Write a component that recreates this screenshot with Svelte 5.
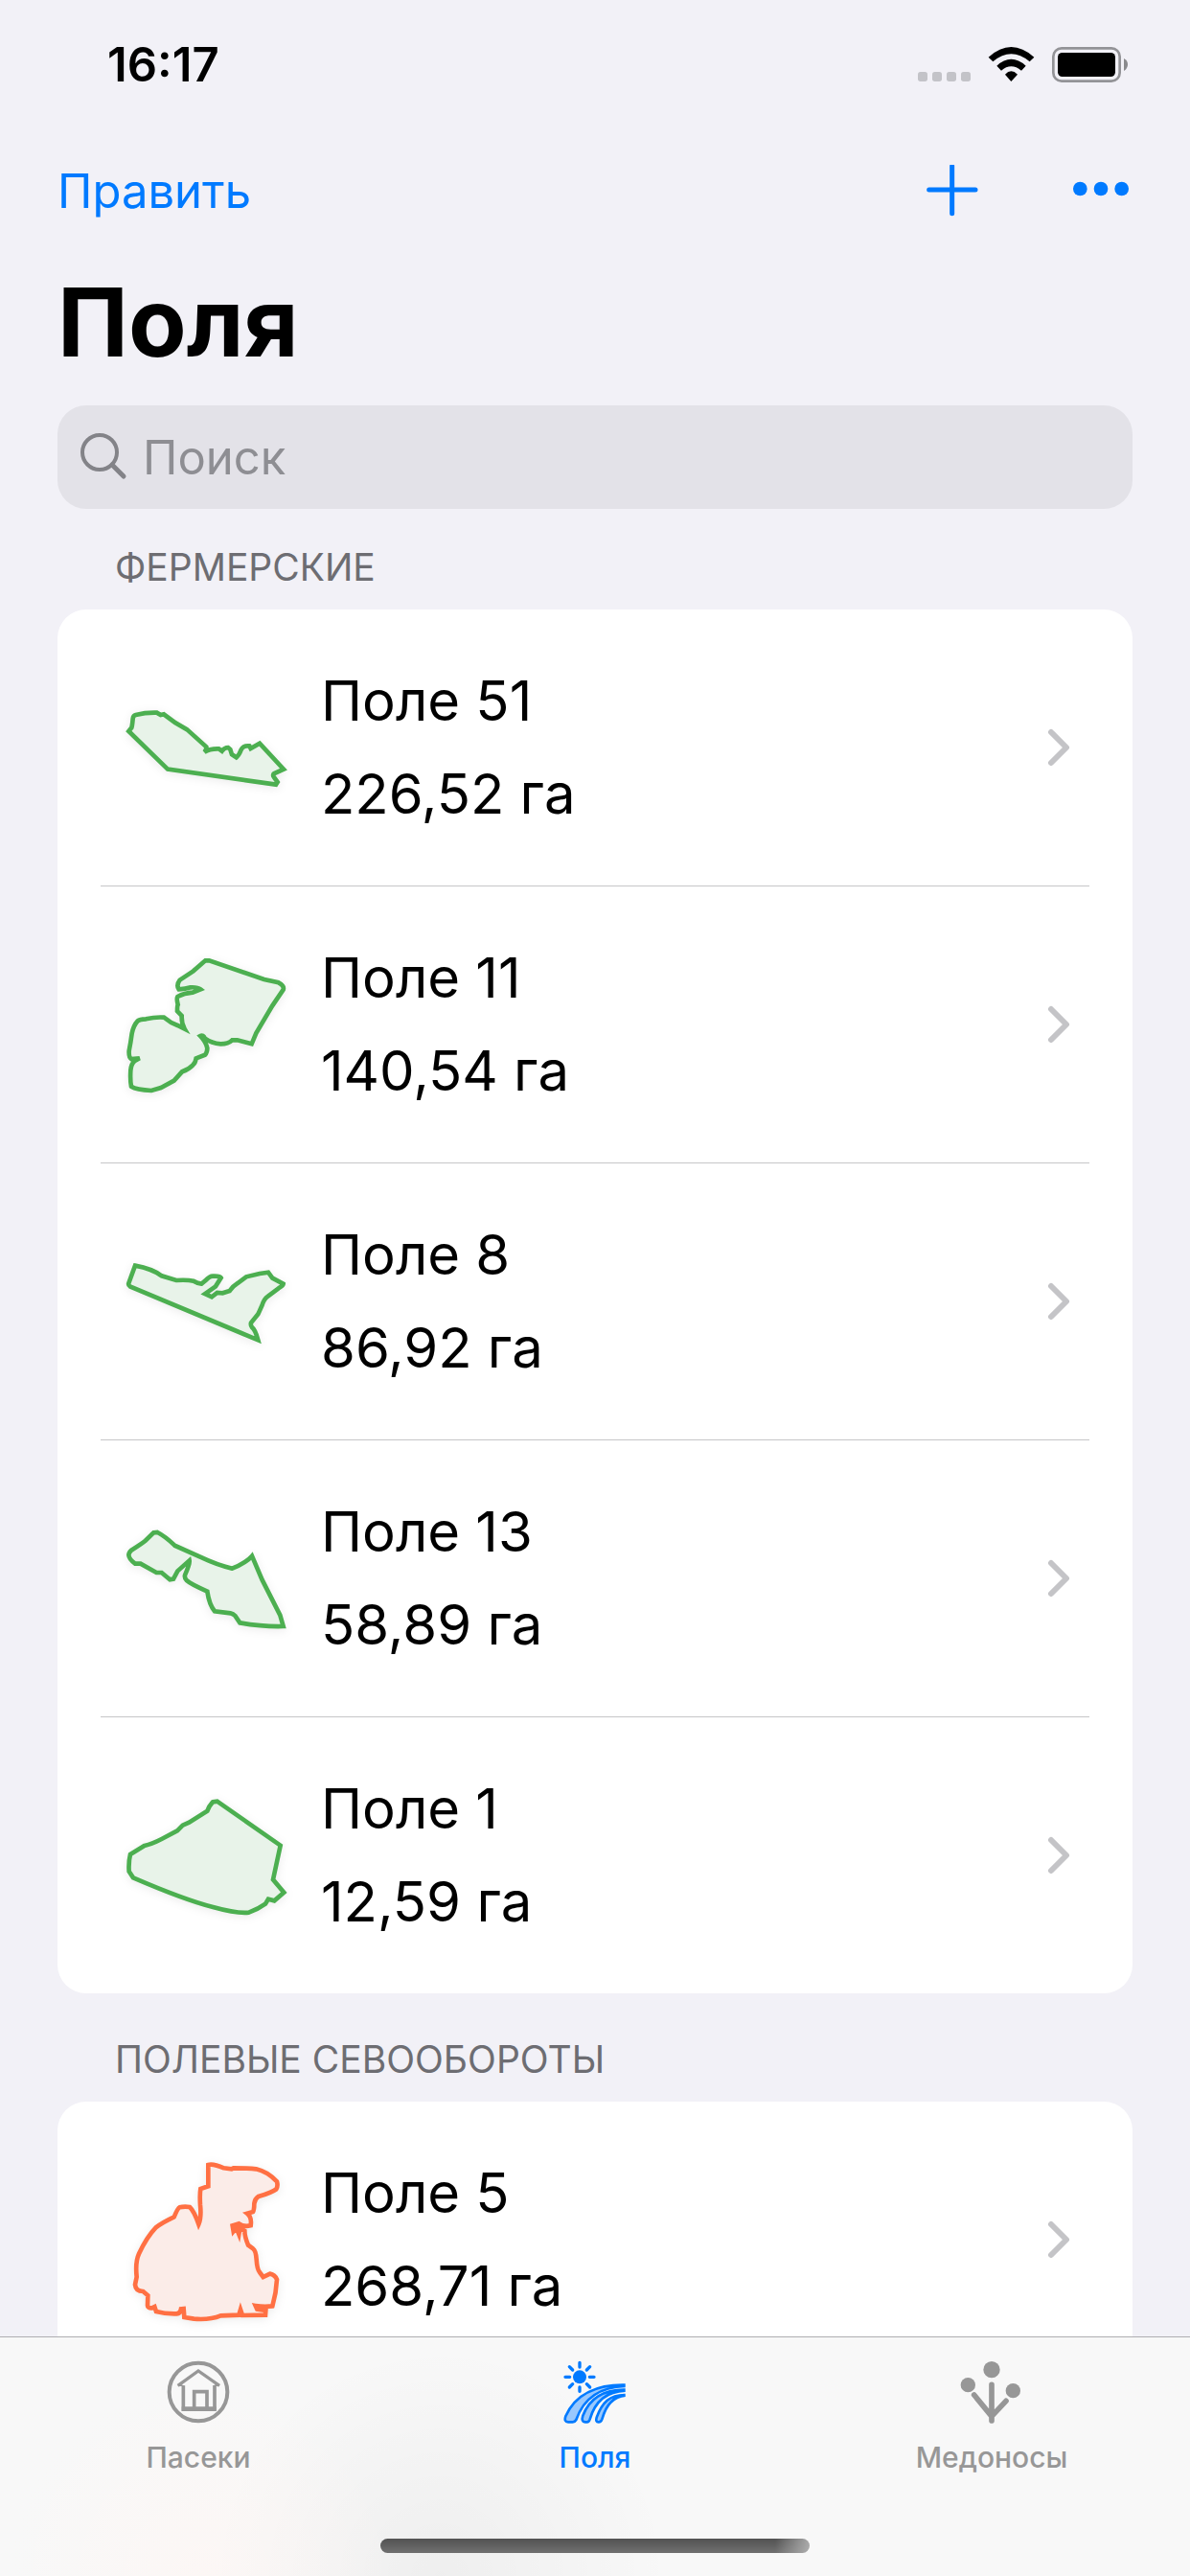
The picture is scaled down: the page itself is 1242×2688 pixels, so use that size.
<script lang="ts">
  interface Field {
    name: string;
    area: string;
    viewBox: string;
    outline: string;
  }

  interface Group {
    title: string;
    kind: 'farm' | 'rotation';
    fields: Field[];
  }

  const groups: Group[] = [
    {
      title: 'Фермерские',
      kind: 'farm',
      fields: [
        {
          name: 'Поле 51',
          area: '226,52 га',
          viewBox: '78 -30 540 540',
          outline:
            'M106 189 L115 178 Q117 172 119 150 Q120 140 128 138 Q160 130 194 131 L206 138 L216 136 Q250 164 289 184 L349 238 Q350 246 343 254 Q360 243 388 244 L398 251 Q406 240 417 240 L424 246 L429 262 L443 271 Q452 264 458 247 Q465 233 484 235 L488 243 L516 227 L591 308 L562 321 Q555 326 561 333 L572 348 L567 356 L228 308 Z'
        },
        {
          name: 'Поле 11',
          area: '140,54 га',
          viewBox: '78 27 540 540',
          outline:
            'M346 97 L358 97 L530 156 L575 166 Q594 176 590 188 L556 238 L505 324 L491 358 L446 346 L430 346 Q418 358 394 358 Q365 356 345 341 Q339 328 330 333 Q348 352 352 371 Q352 384 345 392 L317 403 Q315 417 307 424 Q294 438 273 445 L248 473 L207 495 L177 504 Q130 501 114 491 Q110 472 112 440 Q114 420 124 412 L140 403 L114 405 Q106 400 107 380 Q112 355 116 325 Q121 300 134 286 Q140 281 160 280 Q190 273 217 275 Q237 292 259 300 L281 311 Q271 294 272 270 L258 255 Q258 238 260 235 Q255 215 259 210 Q280 199 306 197 L331 187 Q322 180 300 181 Q283 186 263 187 Q254 174 266 158 L308 130 Z'
        },
        {
          name: 'Поле 8',
          area: '86,92 га',
          viewBox: '78 -66 540 540',
          outline:
            'M126 92 Q180 102 209 124 L255 138 Q290 136 309 140 Q322 148 334 149 L345 140 Q360 124 370 125 Q392 124 395 130 L378 157 L345 180 L366 190 L383 177 L400 178 L422 171 Q432 156 447 147 L474 127 L516 117 L543 113 L556 131 L590 149 Q590 154 575 163 L542 188 Q530 196 524 215 L511 244 L489 271 Q487 278 492 285 Q502 292 511 325 L430 291 L110 157 Q104 153 106 147 Z'
        },
        {
          name: 'Поле 13',
          area: '58,89 га',
          viewBox: '78 -40 540 540',
          outline:
            'M184 87 L196 86 Q220 98 250 127 L330 163 Q385 189 430 199 Q475 180 492 160 L524 235 L580 345 L590 380 Q530 382 454 369 L440 348 Q433 340 425 339 L375 333 Q358 312 352 271 Q300 248 288 237 Q280 229 282 220 Q298 184 296 174 L259 207 L246 232 L235 234 L209 212 L193 212 L143 184 L126 184 Q107 170 106 157 Q106 149 114 142 Q150 119 158 112 Z'
        },
        {
          name: 'Поле 1',
          area: '12,59 га',
          viewBox: '78 -14 540 540',
          outline:
            'M369 89 L383 87 L581 225 L558 332 L592 372 L562 398 L543 393 L534 408 Q512 424 482 435 Q445 439 370 418 Q280 395 120 326 L107 306 Q105 277 111 253 L155 226 Q178 221 209 205 L258 179 L275 162 L295 153 L352 117 Q357 102 369 89 Z'
        }
      ]
    },
    {
      title: 'Полевые севообороты',
      kind: 'rotation',
      fields: [
        {
          name: 'Поле 5',
          area: '268,71 га',
          viewBox: '78 48 540 540',
          outline:
            'M355 84 Q370 79 404 94 L428 97 L434 94 Q480 94 505 97 Q540 105 570 136 Q574 150 568 160 Q556 170 512 183 Q501 190 499 205 Q499 225 495 231 L477 236 Q492 248 488 274 Q465 279 451 268 L431 274 L434 292 L443 281 L451 301 L454 283 L469 291 Q469 308 480 335 L496 347 Q504 352 506 380 Q508 412 516 420 L527 435 L548 425 Q564 428 570 443 Q568 485 556 526 Q530 529 503 525 L508 536 L535 540 L534 554 L462 555 L456 537 L451 554 L394 556 Q360 570 310 566 L280 561 L278 534 L270 535 Q268 549 256 550 Q220 551 192 543 L187 528 L179 532 Q165 533 165 524 L166 493 L151 480 Q128 480 126 459 L131 435 Q126 388 138 362 Q163 309 191 280 Q210 265 248 247 Q260 219 265 217 Q280 213 297 216 Q311 229 325 270 Q334 250 330 210 Q328 175 331 159 L355 151 Z'
        }
      ]
    }
  ];

  let activeTab = $state('fields');
  let query = $state('');
</script>

<div class="screen">
  <header>
    <div class="status">
      <span class="clock">16:17</span>
      <svg width="55" height="38" viewBox="54 84 165 114" fill="#c3c3c8" aria-hidden="true">
        <rect x="54" y="165" width="30" height="30" rx="8" />
        <rect x="99" y="165" width="30" height="30" rx="8" />
        <rect x="144" y="165" width="30" height="30" rx="8" />
        <rect x="189" y="165" width="30" height="30" rx="8" />
      </svg>
      <svg width="49" height="38" viewBox="273 84 147 114" aria-hidden="true">
        <path d="M275 119 Q346 55 418 119 L404 133 Q346 85 289 133 Z" />
        <path d="M301 146 Q346 105 392 146 L378 161 Q346 135 315 161 Z" />
        <path d="M327 173 Q346 153 366 173 L346 195 Z" />
      </svg>
      <svg width="80" height="38" viewBox="474 84 240 114" aria-hidden="true">
        <rect x="478" y="91" width="208" height="103" rx="26" fill="none" stroke="#939397" stroke-width="8" />
        <rect x="492" y="105" width="180" height="75" rx="14" />
        <path d="M699 123 Q711 129 711 142 Q711 155 699 162 Z" fill="#8a8a8d" />
      </svg>
    </div>

    <nav class="toolbar">
      <button class="edit">Править</button>
      <button aria-label="Добавить">
        <svg width="54" height="54" viewBox="80 456 162 162" stroke="#007aff" stroke-width="15" stroke-linecap="round">
          <path d="M88 534 H233 M160 460 V608" />
        </svg>
      </button>
      <button aria-label="Ещё">
        <svg width="58" height="54" viewBox="540 456 174 162" fill="#007aff">
          <circle cx="562" cy="531" r="22" />
          <circle cx="627" cy="531" r="22" />
          <circle cx="692" cy="531" r="22" />
        </svg>
      </button>
    </nav>

    <h1>Поля</h1>

    <label class="search">
      <svg width="50" height="50" viewBox="0 0 50 50" fill="none" stroke="#838388" stroke-width="4" stroke-linecap="round" aria-hidden="true">
        <circle cx="20" cy="20" r="18" />
        <path d="M33 33 L45 45" stroke-width="5" />
      </svg>
      <input type="text" placeholder="Поиск" aria-label="Поиск" bind:value={query} />
    </label>
  </header>

  <main>
    {#each groups as group (group.title)}
      <section>
        <h2>{group.title}</h2>
        <ul class="card">
          {#each group.fields as field (field.name)}
            <li>
              <a href="#field" class="row">
                <svg class="outline {group.kind}" viewBox={field.viewBox} aria-hidden="true">
                  <path d={field.outline} />
                </svg>
                <span class="info">
                  <span>{field.name}</span>
                  <span>{field.area}</span>
                </span>
                <svg class="chevron" viewBox="0 0 24 40" aria-hidden="true">
                  <path d="M4 4 L20 20 L4 36" />
                </svg>
              </a>
            </li>
          {/each}
        </ul>
      </section>
    {/each}
  </main>

  <footer>
    <div class="tabs">
      <button class:active={activeTab === 'apiaries'} onclick={() => (activeTab = 'apiaries')}>
        <svg viewBox="99 69 198 198" fill="none" stroke="currentColor" aria-hidden="true">
          <circle cx="198" cy="168" r="91" stroke-width="12" />
          <path d="M151 148 V222 H249 V148 M185 220 V167 H225 V220" stroke-width="11" />
          <path d="M134 148 L198 102 L264 148" stroke-width="10" />
          <path d="M133 150 H156 L140 142 Z M265 150 H242 L256 142 Z" fill="currentColor" stroke="none" />
          <path d="M146 221 H254" stroke-width="14" />
        </svg>
        <span>Пасеки</span>
      </button>
      <button class:active={activeTab === 'fields'} onclick={() => (activeTab = 'fields')}>
        <svg viewBox="142 68 198 198" fill="none" stroke="currentColor" aria-hidden="true">
          <circle cx="193" cy="120" r="21" fill="currentColor" stroke="none" />
          <path
            d="M193 75 V89 M193 152 V165 M148 120 H162 M224 120 H238 M161 88 L171 98 M225 88 L215 98 M161 152 L171 142 M225 152 L215 142"
            stroke-width="10"
            stroke-linecap="round"
          />
          <g fill="#99c8fd" stroke-width="8">
            <path d="M336 145 C250 143 180 172 149 243 Q143 261 157 261 H171 Q178 261 182 254 C206 185 260 151 336 149" />
            <path d="M336 160 C272 159 225 185 203 241 Q197 261 210 261 H216 Q222 261 225 252 C241 198 278 165 336 163" />
            <path d="M336 176 C288 175 263 200 246 247 Q242 261 252 261 Q260 261 263 252 C276 207 297 181 336 178" />
          </g>
        </svg>
        <span>Поля</span>
      </button>
      <button class:active={activeTab === 'plants'} onclick={() => (activeTab = 'plants')}>
        <svg viewBox="156 68 198 198" fill="currentColor" aria-hidden="true">
          <circle cx="255" cy="97" r="26" />
          <circle cx="181" cy="145" r="23" />
          <circle cx="322" cy="163" r="23" />
          <path
            d="M255 144 V257 M200 176 L255 243 L300 195"
            fill="none"
            stroke="currentColor"
            stroke-width="17"
            stroke-linecap="round"
            stroke-linejoin="round"
          />
        </svg>
        <span>Медоносы</span>
      </button>
    </div>
    <div class="home-bar"></div>
  </footer>
</div>

<style>
  :global(body) {
    margin: 0;
    background: #f2f1f7;
  }
  .screen {
    display: flex;
    flex-direction: column;
    height: 100vh;
    background: #f2f1f7;
    color: #000;
    font-family: Inter, 'Noto Sans', sans-serif;
  }
  button {
    padding: 0;
    border: none;
    background: none;
    font-family: inherit;
    cursor: pointer;
  }
  svg {
    display: block;
    flex-shrink: 0;
  }
  header {
    flex-shrink: 0;
    padding: 0 60px;
  }
  .status {
    display: flex;
    align-items: center;
    gap: 18px;
    height: 134px;
    padding: 0 4px 0 52px;
  }
  .clock {
    flex: 1;
    font-size: 49px;
    font-weight: 600;
  }
  .toolbar {
    display: flex;
    align-items: center;
    gap: 99px;
    height: 130px;
    padding-right: 4px;
  }
  .edit {
    margin-right: auto;
    font-size: 49px;
    color: #007aff;
  }
  h1 {
    margin: 0 0 15px;
    font-size: 99px;
    line-height: 144px;
    font-weight: 700;
  }
  .search {
    display: flex;
    align-items: center;
    gap: 15px;
    height: 108px;
    padding: 0 24px;
    border-radius: 30px;
    background: #e3e2e8;
  }
  .search input {
    flex: 1;
    min-width: 0;
    padding: 0;
    border: none;
    outline: none;
    background: none;
    font-family: inherit;
    font-size: 49px;
    color: #000;
  }
  .search input::placeholder {
    color: #8e8e93;
    opacity: 1;
  }
  main {
    display: flex;
    flex: 1;
    flex-direction: column;
    gap: 45px;
    min-height: 0;
    padding: 37px 60px 0;
    overflow-y: auto;
    scrollbar-width: none;
  }
  h2 {
    margin: 0 60px 20px;
    font-size: 39px;
    line-height: 48px;
    font-weight: 400;
    text-transform: uppercase;
    color: #6d6d72;
  }
  .card {
    margin: 0;
    padding: 0 45px;
    list-style: none;
    border-radius: 30px;
    background: #fff;
  }
  li + li {
    border-top: 1px solid #c6c6c8;
  }
  .row {
    display: flex;
    align-items: center;
    gap: 30px;
    height: 288px;
    padding: 0 20px;
    color: inherit;
    text-decoration: none;
  }
  .outline {
    width: 180px;
    height: 180px;
    stroke-width: 14;
    filter: drop-shadow(0 2px 5px rgba(0, 0, 0, 0.08));
  }
  .farm {
    fill: #e8f3e9;
    stroke: #4caf50;
  }
  .rotation {
    fill: #fbece8;
    stroke: #ff7043;
  }
  .info {
    display: flex;
    flex: 1;
    flex-direction: column;
    font-size: 58px;
    line-height: 97px;
  }
  .chevron {
    width: 24px;
    height: 40px;
    fill: none;
    stroke: #c4c4c7;
    stroke-width: 6;
    stroke-linecap: round;
    stroke-linejoin: round;
  }
  footer {
    flex-shrink: 0;
    border-top: 1px solid #aeaeb1;
    background:
      radial-gradient(circle at 17% 100%, rgba(255, 246, 243, 0.6), transparent 200px),
      radial-gradient(circle at 37% 100%, rgba(0, 0, 0, 0.04), transparent 240px),
      #f8f8f8;
  }
  .tabs {
    display: flex;
    padding-top: 24px;
  }
  .tabs button {
    display: flex;
    flex: 1;
    flex-direction: column;
    align-items: center;
    gap: 16px;
    font-size: 30px;
    line-height: 38px;
    font-weight: 500;
    color: #979797;
  }
  .tabs svg {
    width: 66px;
    height: 66px;
  }
  .tabs .active {
    color: #007aff;
  }
  .home-bar {
    width: 36%;
    height: 15px;
    margin: 66px auto 24px;
    border-radius: 8px;
    background:
      linear-gradient(90deg, transparent 92%, rgba(190, 190, 190, 0.8)),
      linear-gradient(#525252, #707070);
  }
</style>
